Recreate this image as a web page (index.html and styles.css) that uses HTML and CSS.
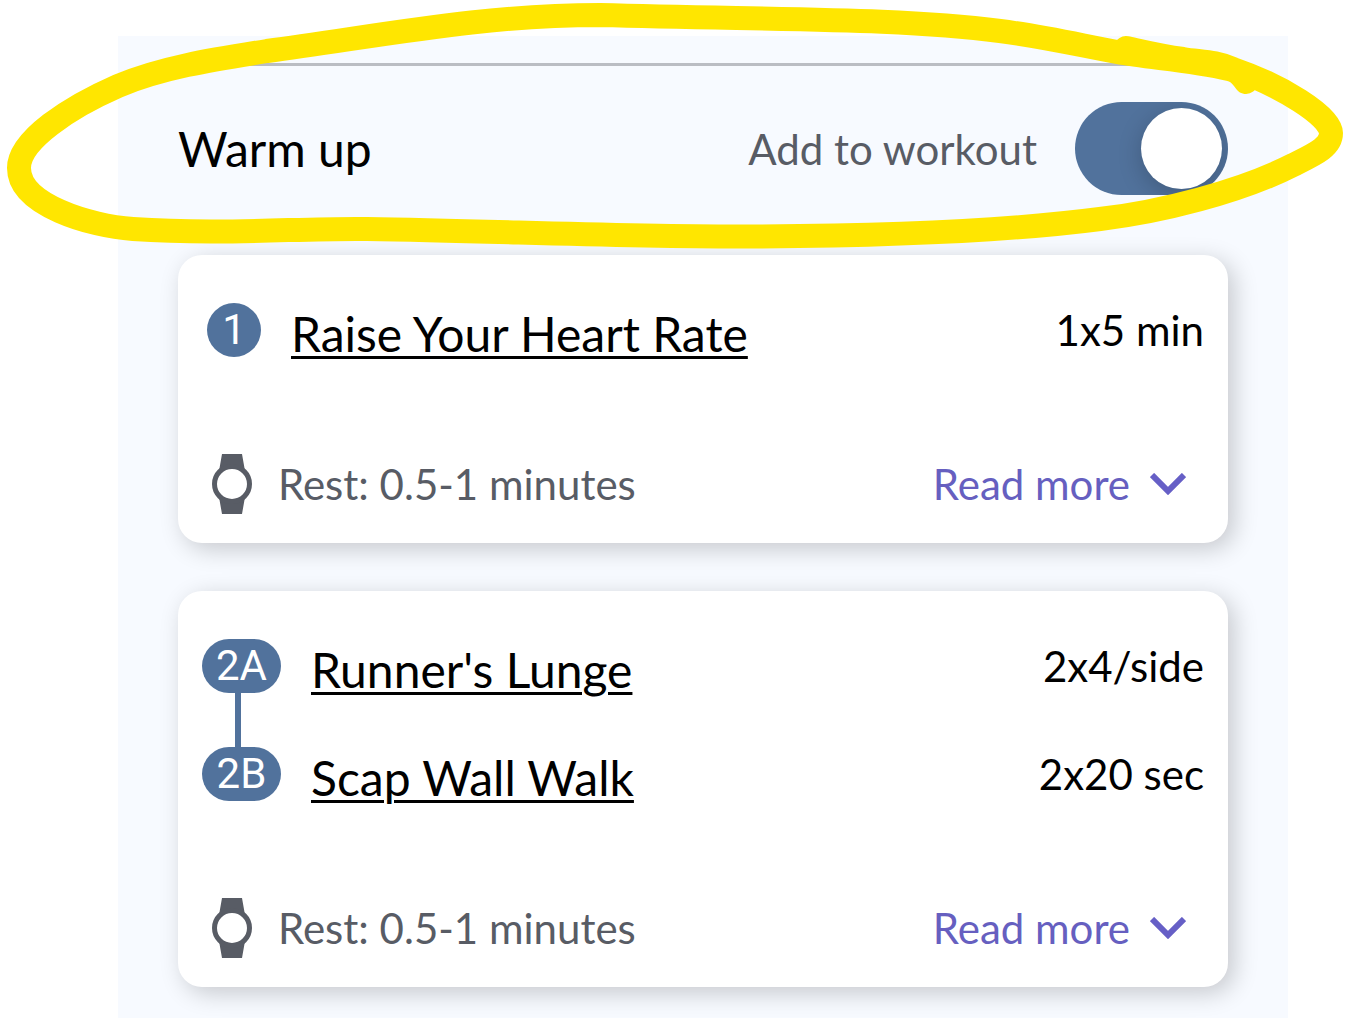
FILE: index.html
```html
<!DOCTYPE html>
<html lang="en">
<head>
  <meta charset="UTF-8">
  <meta name="viewport" content="width=device-width, initial-scale=1.0">
  <title>Workout - Warm up</title>
  <link rel="stylesheet" href="styles.css">
</head>
<body>
  <main class="workout">
    <hr class="divider">

    <div class="section-header">
      <h1>Warm up</h1>
      <label class="toggle-label" for="addToWorkout">Add to workout</label>
      <input type="checkbox" class="toggle" id="addToWorkout" checked>
    </div>

    <section class="card">
      <div class="exercise">
        <span class="badge round">1</span>
        <a class="name" href="#raise-your-heart-rate">Raise Your Heart Rate</a>
        <span class="sets">1x5 min</span>
      </div>
      <div class="card-footer">
        <svg class="watch" viewBox="0 0 40 60" aria-hidden="true">
          <path d="M10 0h20l3 17H7zM7 43h26l-3 17H10z"/>
          <circle cx="20" cy="30" r="17.5"/>
        </svg>
        <span class="rest">Rest: 0.5-1 minutes</span>
        <button type="button" class="read-more">
          Read more
          <svg class="chevron" viewBox="0 0 36 22" aria-hidden="true"><path d="M2 2l16 16L34 2"/></svg>
        </button>
      </div>
    </section>

    <section class="card">
      <div class="exercise">
        <span class="badge linked">2A</span>
        <a class="name" href="#runners-lunge">Runner's Lunge</a>
        <span class="sets">2x4/side</span>
      </div>
      <div class="exercise">
        <span class="badge">2B</span>
        <a class="name" href="#scap-wall-walk">Scap Wall Walk</a>
        <span class="sets">2x20 sec</span>
      </div>
      <div class="card-footer">
        <svg class="watch" viewBox="0 0 40 60" aria-hidden="true">
          <path d="M10 0h20l3 17H7zM7 43h26l-3 17H10z"/>
          <circle cx="20" cy="30" r="17.5"/>
        </svg>
        <span class="rest">Rest: 0.5-1 minutes</span>
        <button type="button" class="read-more">
          Read more
          <svg class="chevron" viewBox="0 0 36 22" aria-hidden="true"><path d="M2 2l16 16L34 2"/></svg>
        </button>
      </div>
    </section>
  </main>

  <!-- hand-drawn highlight around the section header -->
  <svg class="highlight" viewBox="0 0 1351 255" aria-hidden="true">
    <path d="M1246 82C1240 74 1236 70 1229 69C1190 60 1150 58 1117 52C1070 43 1040 36 1000 31C900 18 780 20 600 15C480 15 380 36 267 51C210 60 160 68 118 86C70 107 19 140 19 168C19 205 90 226 133 229C220 235 300 228 367 229C500 231 620 237 750 236.500C870 236 1000 232 1100 219C1160 212 1240 192 1293 165C1315 154 1331 147 1331 133C1331 116 1280 85 1233 69C1215 61 1200 62 1183 59C1160 56 1140 51 1126 48"/>
  </svg>
</body>
</html>
```

FILE: styles.css
```css
* {
  box-sizing: border-box;
}
body {
  margin: 0;
  padding: 36px 63px 0 118px;
  position: relative;
  background: #fff;
  color: #000;
  font-family: Lato, "Liberation Sans", sans-serif;
  font-size: 42px;
  line-height: 54px;
}
.workout {
  padding: 27px 60px 31px;
  background: #f7faff;
}
.divider {
  height: 3px;
  margin: 0;
  border: none;
  background: #babdc3;
}
.section-header {
  display: flex;
  align-items: center;
  padding: 36px 0 60px;
}
h1 {
  margin: 0 auto 0 0;
  font-size: 48px;
  font-weight: 400;
}
.toggle-label {
  margin-right: 38px;
  color: #585c65;
}
.toggle {
  appearance: none;
  display: flex;
  justify-content: flex-start;
  width: 153px;
  height: 93px;
  margin: 0;
  padding: 6px;
  border-radius: 48px;
  background: #51729c;
  overflow: hidden;
  cursor: pointer;
}
.toggle::before {
  content: "";
  width: 81px;
  height: 81px;
  border-radius: 50%;
  background: #fff;
  box-shadow: 0 6px 24px rgba(0,0,0,0.2);
}
.toggle:checked {
  justify-content: flex-end;
}
.card {
  padding: 48px 24px 29px;
  border-radius: 24px;
  background: #fff;
  box-shadow: 6px 6px 24px rgba(0,0,0,0.2);
}
.card + .card {
  margin-top: 48px;
}
.exercise {
  display: flex;
  align-items: center;
  height: 54px;
}
.exercise + .exercise {
  margin-top: 54px;
}
.badge {
  position: relative;
  width: 79px;
  height: 54px;
  margin-right: 30px;
  border-radius: 27px;
  background: #51729c;
  color: #fff;
  font-family: Roboto, "Liberation Sans", sans-serif;
  text-align: center;
}
.badge.round {
  width: 54px;
  margin-left: 5px;
}
/* line joining the exercises of a superset */
.badge.linked::after {
  content: "";
  position: absolute;
  top: 100%;
  left: 33px;
  width: 6px;
  height: 54px;
  background: #51729c;
}
.name {
  padding-top: 8px;
  color: #000;
  font-size: 48px;
  text-decoration-thickness: 3px;
  text-underline-offset: 4px;
}
.sets {
  margin-left: auto;
}
.card-footer {
  display: flex;
  align-items: center;
  height: 60px;
  margin-top: 97px;
  padding: 0 18px 0 10px;
}
.watch {
  width: 40px;
  height: 60px;
  margin-right: 26px;
  fill: #585c65;
}
.watch circle {
  fill: #fff;
  stroke: #585c65;
  stroke-width: 5;
}
.rest {
  color: #585c65;
}
.read-more {
  display: flex;
  align-items: center;
  gap: 20px;
  margin-left: auto;
  padding: 0;
  border: none;
  background: none;
  color: #665fc0;
  font: inherit;
  cursor: pointer;
}
.chevron {
  width: 36px;
  height: 22px;
  fill: none;
  stroke: #665fc6;
  stroke-width: 6;
}
.highlight {
  position: absolute;
  top: 0;
  left: 0;
  width: 100%;
  fill: none;
  stroke: #ffe600;
  stroke-width: 24;
  stroke-linecap: round;
  stroke-linejoin: round;
  pointer-events: none;
}
```
